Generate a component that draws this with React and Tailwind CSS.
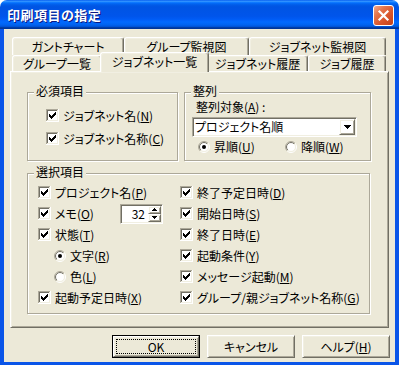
import React from "react";

const raised =
  "border border-t-white border-l-white border-r-[#716F64] border-b-[#716F64] shadow-[inset_1px_1px_0_#F1EFE2,inset_-1px_-1px_0_#ACA899]";
const sunken =
  "border border-t-[#ACA899] border-l-[#ACA899] border-r-white border-b-white shadow-[inset_1px_1px_0_#716F64,inset_-1px_-1px_0_#F1EFE2]";

function Check() {
  return (
    <svg width="13" height="13" viewBox="0 0 13 13" shapeRendering="crispEdges" className="shrink-0">
      <rect x="0" y="0" width="13" height="13" fill="#fff" />
      <path d="M0 0h12v1H1v11H0z" fill="#ACA899" />
      <path d="M1 1h10v1H2v9H1z" fill="#716F64" />
      <path d="M11 1h1v11H1v-1h10z" fill="#F1EFE2" />
      <path d="M12 0h1v13H0v-1h12z" fill="#fff" />
      <path
        d="M9 3h1v1h-1z M8 4h2v1h-2z M3 5h1v1h-1z M7 5h3v1h-3z M3 6h2v1h-2z M6 6h3v1h-3z M3 7h5v1h-5z M4 8h3v1h-3z M5 9h1v1h-1z"
        fill="#000"
      />
    </svg>
  );
}

function Radio({ on }) {
  return (
    <svg width="12" height="12" viewBox="0 0 12 12" className="shrink-0">
      <defs>
        <linearGradient id="ro" x1="0" y1="0" x2="1" y2="1">
          <stop offset="0.5" stopColor="#ACA899" />
          <stop offset="0.5" stopColor="#ffffff" />
        </linearGradient>
        <linearGradient id="ri" x1="0" y1="0" x2="1" y2="1">
          <stop offset="0.5" stopColor="#716F64" />
          <stop offset="0.5" stopColor="#F1EFE2" />
        </linearGradient>
      </defs>
      <circle cx="6" cy="6" r="5.5" fill="none" stroke="url(#ro)" />
      <circle cx="6" cy="6" r="4.5" fill="#fff" stroke="url(#ri)" />
      {on && <circle cx="6" cy="6" r="2" fill="#000" />}
    </svg>
  );
}

function CheckRow({ children, className = "" }) {
  return (
    <div className={"flex items-center " + className}>
      <Check />
      <span className="ml-[4px] whitespace-nowrap">{children}</span>
    </div>
  );
}

function RadioRow({ on, children, className = "" }) {
  return (
    <div className={"flex items-center " + className}>
      <Radio on={on} />
      <span className="ml-[4px] whitespace-nowrap">{children}</span>
    </div>
  );
}

function Group({ label, className = "", children }) {
  return (
    <div
      className={
        "relative border border-[#ACA899] shadow-[inset_1px_1px_0_#fff,1px_1px_0_#fff] " + className
      }
    >
      <div className="absolute -top-[9px] left-[6px] px-[2px] bg-[#ECE9D8] leading-[14px] whitespace-nowrap">
        {label}
      </div>
      {children}
    </div>
  );
}

const tabBase =
  "flex items-center justify-center bg-[#ECE9D8] border-t border-l border-r border-t-white border-l-white border-r-[#716F64] rounded-t-[3px] shadow-[inset_-1px_0_0_#ACA899,inset_1px_1px_0_#F1EFE2] whitespace-nowrap";

export default function App() {
  return (
    <div className="w-[399px] h-[365px] bg-white text-black text-[12px] leading-[14px] font-['Noto_Sans_CJK_JP','Noto_Sans_CJK_SC',sans-serif] [font-feature-settings:'palt']">
      <div className="w-full h-full flex flex-col rounded-t-[7px] overflow-hidden">
        {/* Title bar */}
        <div className="h-[29px] shrink-0 flex items-center pl-[7px] pr-[5px] bg-[linear-gradient(to_bottom,#0058EE_0%,#3593FF_4%,#288EFF_6%,#127DFF_8%,#036FFC_10%,#0262EE_14%,#0057E5_20%,#0054E3_24%,#0055EB_56%,#005BF5_66%,#026AFE_76%,#0062EF_86%,#0052D6_92%,#0040AB_94%,#003092_100%)]">
          <span className="flex-1 text-white font-bold text-[13px] leading-[16px] tracking-[0.5px] [text-shadow:1px_1px_0_#0A1883]">
            印刷項目の指定
          </span>
          <div className="w-[21px] h-[21px] mt-[1px] rounded-[3px] border border-white flex items-center justify-center bg-[linear-gradient(135deg,#F4A98C_0%,#E5754C_30%,#D8532A_65%,#C4411A_100%)]">
            <svg width="13" height="13" viewBox="0 0 13 13">
              <path d="M2.5 2.5L10.5 10.5M10.5 2.5L2.5 10.5" stroke="#fff" strokeWidth="2.2" strokeLinecap="square" />
            </svg>
          </div>
        </div>

        {/* Body */}
        <div className="flex-1 flex flex-col bg-[#ECE9D8] border-x-[4px] border-b-[3px] border-[#0A55E8]">
          {/* Tab control */}
          <div className="mt-[8px] ml-[6px] w-[379px] flex flex-col">
            <div className="pl-[2px] flex h-[18px]">
              <div className={tabBase + " w-[112px] h-[18px]"}>ガントチャート</div>
              <div className={tabBase + " w-[125px] h-[18px]"}>グループ監視図</div>
              <div className={tabBase + " w-[137px] h-[18px]"}>ジョブネット監視図</div>
            </div>
            <div className="pl-[2px] flex items-end h-[16px]">
              <div className={tabBase + " w-[90px] h-[16px]"}>グループ一覧</div>
              <div className={tabBase + " w-[109px] h-[20px] -mx-[2px] -mb-[1px] relative z-10 pb-[2px]"}>
                ジョブネット一覧
              </div>
              <div className={tabBase + " w-[101px] h-[16px]"}>ジョブネット履歴</div>
              <div className={tabBase + " w-[78px] h-[16px]"}>ジョブ履歴</div>
            </div>
            {/* Panel */}
            <div className="h-[257px] flex flex-col border border-t-white border-l-white border-r-[#716F64] border-b-[#716F64] shadow-[inset_1px_1px_0_#F1EFE2,inset_-1px_-1px_0_#ACA899]">
              <div className="flex mt-[20px] ml-[16px]">
                <Group label="必須項目" className="w-[151px] h-[69px]">
                  <div className="pl-[18px] pt-[11px] flex flex-col">
                    <CheckRow className="h-[23px]">
                      ジョブネット名(<u>N</u>)
                    </CheckRow>
                    <CheckRow className="h-[23px]">
                      ジョブネット名称(<u>C</u>)
                    </CheckRow>
                  </div>
                </Group>
                <Group label="整列" className="ml-[6px] w-[187px] h-[69px]">
                  <div className="flex flex-col">
                    <div className="ml-[11px] mt-[7px] h-[14px] whitespace-nowrap">
                      整列対象(<u>A</u>) :
                    </div>
                    <div className={sunken + " ml-[7px] mt-[3px] w-[165px] h-[20px] bg-white p-[1px] flex"}>
                      <span className="flex-1 pl-[1px] flex items-center whitespace-nowrap">プロジェクト名順</span>
                      <div className={raised + " w-[16px] h-full flex items-center justify-center"}>
                        <svg width="7" height="4" viewBox="0 0 7 4" shapeRendering="crispEdges">
                          <path d="M0 0h7v1H0z M1 1h5v1H1z M2 2h3v1H2z M3 3h1v1H3z" fill="#000" />
                        </svg>
                      </div>
                    </div>
                    <div className="ml-[13px] mt-[3px] h-[14px] flex items-center">
                      <RadioRow on className="w-[87px]">
                        昇順(<u>U</u>)
                      </RadioRow>
                      <RadioRow>
                        降順(<u>W</u>)
                      </RadioRow>
                    </div>
                  </div>
                </Group>
              </div>

              <Group label="選択項目" className="ml-[16px] mt-[12px] w-[343px] h-[141px]">
                <div className="pl-[10px] pt-[8px] flex">
                  <div className="w-[142px] flex flex-col">
                    <CheckRow className="h-[21px]">
                      プロジェクト名(<u>P</u>)
                    </CheckRow>
                    <div className="h-[21px] flex items-center">
                      <CheckRow className="w-[82px]">
                        メモ(<u>O</u>)
                      </CheckRow>
                      <div className={sunken + " w-[43px] h-[20px] bg-white p-[1px] flex"}>
                        <span className="flex-1 text-right pr-[3px] flex items-center justify-end">32</span>
                        <div className="w-[13px] flex flex-col">
                          <div className={raised + " h-[8px] flex items-center justify-center"}>
                            <svg width="5" height="3" viewBox="0 0 5 3" shapeRendering="crispEdges">
                              <path d="M2 0h1v1H2z M1 1h3v1H1z M0 2h5v1H0z" fill="#000" />
                            </svg>
                          </div>
                          <div className={raised + " h-[8px] flex items-center justify-center"}>
                            <svg width="5" height="3" viewBox="0 0 5 3" shapeRendering="crispEdges">
                              <path d="M0 0h5v1H0z M1 1h3v1H1z M2 2h1v1H2z" fill="#000" />
                            </svg>
                          </div>
                        </div>
                      </div>
                    </div>
                    <CheckRow className="h-[21px]">
                      状態(<u>T</u>)
                    </CheckRow>
                    <RadioRow on className="h-[21px] pl-[16px]">
                      文字(<u>R</u>)
                    </RadioRow>
                    <RadioRow className="h-[21px] pl-[16px]">
                      色(<u>L</u>)
                    </RadioRow>
                    <CheckRow className="h-[21px]">
                      起動予定日時(<u>X</u>)
                    </CheckRow>
                  </div>
                  <div className="flex flex-col">
                    <CheckRow className="h-[21px]">
                      終了予定日時(<u>D</u>)
                    </CheckRow>
                    <CheckRow className="h-[21px]">
                      開始日時(<u>S</u>)
                    </CheckRow>
                    <CheckRow className="h-[21px]">
                      終了日時(<u>E</u>)
                    </CheckRow>
                    <CheckRow className="h-[21px]">
                      起動条件(<u>Y</u>)
                    </CheckRow>
                    <CheckRow className="h-[21px]">
                      メッセージ起動(<u>M</u>)
                    </CheckRow>
                    <CheckRow className="h-[21px]">
                      グループ/親ジョブネット名称(<u>G</u>)
                    </CheckRow>
                  </div>
                </div>
              </Group>
            </div>
          </div>

          {/* Buttons */}
          <div className="mt-[7px] ml-[108px] flex gap-[7px]">
            <div className="w-[88px] h-[23px] border border-black flex">
              <div className={raised + " flex-1 flex p-[2px]"}>
                <div className="flex-1 border border-dotted border-black flex items-center justify-center">OK</div>
              </div>
            </div>
            <div className={raised + " w-[88px] h-[23px] flex items-center justify-center"}>キャンセル</div>
            <div className={raised + " w-[88px] h-[23px] flex items-center justify-center"}>
              ヘルプ(<u>H</u>)
            </div>
          </div>
        </div>
      </div>
    </div>
  );
}
